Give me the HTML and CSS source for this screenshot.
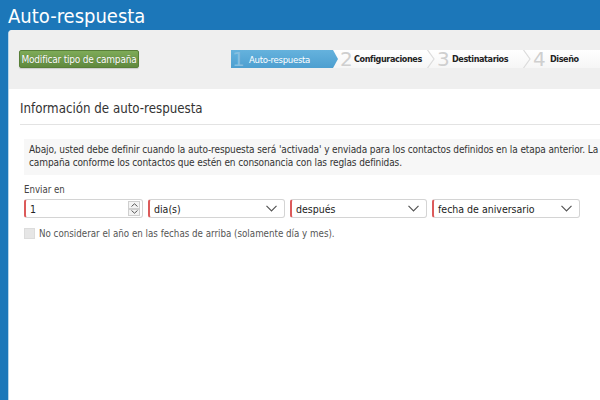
FILE: index.html
```html
<!DOCTYPE html>
<html lang="es">
<head>
<meta charset="utf-8">
<title>Auto-respuesta</title>
<link rel="stylesheet" href="styles.css">
</head>
<body>
<h1 class="page-title">Auto-respuesta</h1>
<div class="panel">
  <div class="toolbar">
    <button class="btn-green">Modificar tipo de campaña</button>
    <ol class="wizard">
      <li class="step active"><span class="num">1</span><span class="label">Auto-respuesta</span></li>
      <li class="step s2"><span class="num">2</span><span class="label">Configuraciones</span><svg class="sep" width="8" height="18" viewBox="0 0 8 18"><path d="M0.5 0 L7 9 L0.5 18" fill="none" stroke="#dcdcdc" stroke-width="1.2"/></svg></li>
      <li class="step s3"><span class="num">3</span><span class="label">Destinatarios</span><svg class="sep" width="8" height="18" viewBox="0 0 8 18"><path d="M0.5 0 L7 9 L0.5 18" fill="none" stroke="#dcdcdc" stroke-width="1.2"/></svg></li>
      <li class="step s4"><span class="num">4</span><span class="label">Diseño</span></li>
    </ol>
  </div>
  <div class="content">
    <h2 class="section-title">Información de auto-respuesta</h2>
    <div class="info">Abajo, usted debe definir cuando la auto-respuesta será 'activada' y enviada para los contactos definidos en la etapa anterior. La<br>campaña conforme los contactos que estén en consonancia con las reglas definidas.</div>
    <div class="field-label">Enviar en</div>
    <div class="fields">
      <div class="control num-input"><span class="val">1</span>
        <span class="spinner"><span class="sp">
          <svg width="7" height="4" viewBox="0 0 7 4"><path d="M0.5 3.5 L3.5 0.8 L6.5 3.5" fill="none" stroke="#555" stroke-width="1"/></svg></span><span class="sp">
          <svg width="7" height="4" viewBox="0 0 7 4"><path d="M0.5 0.5 L3.5 3.2 L6.5 0.5" fill="none" stroke="#555" stroke-width="1"/></svg></span></span>
      </div>
      <div class="control sel w2"><span class="val">dia(s)</span><svg class="chev" width="11" height="7" viewBox="0 0 11 7"><path d="M0.5 0.8 L5.5 5.8 L10.5 0.8" fill="none" stroke="#555" stroke-width="1.2"/></svg></div>
      <div class="control sel w2"><span class="val">después</span><svg class="chev" width="11" height="7" viewBox="0 0 11 7"><path d="M0.5 0.8 L5.5 5.8 L10.5 0.8" fill="none" stroke="#555" stroke-width="1.2"/></svg></div>
      <div class="control sel w3"><span class="val">fecha de aniversario</span><svg class="chev" width="11" height="7" viewBox="0 0 11 7"><path d="M0.5 0.8 L5.5 5.8 L10.5 0.8" fill="none" stroke="#555" stroke-width="1.2"/></svg></div>
    </div>
    <label class="check"><span class="box"></span>No considerar el año en las fechas de arriba (solamente día y mes).</label>
  </div>
</div>
</body>
</html>
```
FILE: styles.css
```css
html, body {
  margin: 0;
  padding: 0;
  height: 100%;
  overflow: hidden;
}
body {
  background: #1c77b9;
  font-family: "DejaVu Sans Condensed", "DejaVu Sans", sans-serif;
  color: #333;
}
.page-title {
  margin: 0;
  height: 30px;
  padding-left: 8px;
  font-size: 20px;
  font-weight: normal;
  line-height: 32px;
  color: #fff;
}
.panel {
  margin-left: 8px;
  border-left: 1px solid #b9d5ea;
  border-top-left-radius: 4px;
  background: #fff;
  height: 370px;
  overflow: hidden;
}
.toolbar {
  background: #efefef;
  height: 59px;
  display: flex;
  align-items: flex-start;
  padding: 20px 0 0 10px;
  box-sizing: border-box;
  border-top-left-radius: 3px;
}
.btn-green {
  flex: none;
  font-family: inherit;
  font-size: 10px;
  letter-spacing: -0.2px;
  white-space: nowrap;
  color: #fff;
  background: linear-gradient(#7eab58, #60893e);
  border: 1px solid #587f38;
  border-radius: 2px;
  height: 18px;
  width: 120px;
  padding: 0;
  text-shadow: 0 0 1px rgba(0,0,0,0.3);
  box-shadow: 0 1px 1px rgba(0,0,0,0.15);
}
.wizard {
  list-style: none;
  margin: 0 0 0 92px;
  padding: 0;
  display: flex;
  height: 18px;
  background: linear-gradient(#fff, #f6f6f6);
  flex: 1;
  min-width: 0;
}
.step {
  height: 18px;
  display: flex;
  align-items: center;
  font-size: 9px;
  letter-spacing: -0.4px;
  font-weight: bold;
  color: #222;
  flex: none;
  background: linear-gradient(#fff, #f6f6f6);
}
.step .num {
  font-family: "DejaVu Sans", sans-serif;
  font-size: 20px;
  font-weight: normal;
  color: #cfcfcf;
  line-height: 18px;
  height: 18px;
  letter-spacing: 0;
  width: 14px;
  margin-left: 2px;
}
.step .sep { margin-left: auto; flex: none; }
.step.active {
  width: 107px;
  background: linear-gradient(#65b2dd, #4d9fd0);
  clip-path: polygon(0 0, calc(100% - 5px) 0, 100% 50%, calc(100% - 5px) 100%, 0 100%);
  color: #fff;
  font-weight: normal;
  font-size: 9.5px;
  letter-spacing: -0.3px;
}
.step.active .num { color: #86bfe0; margin-left: 1px; }
.step.active .label { margin-left: 3px; }
.s2 { width: 97px; }
.s2 .label { margin-left: 0; }
.s3 { width: 96px; }
.s3 .label { margin-left: 1px; }
.s4 { width: 100px; }
.s4 .label { margin-left: 3px; }
.content {
  padding: 11px 0 0 11px;
}
.section-title {
  margin: 0;
  font-size: 13.2px;
  font-weight: normal;
  color: #333;
  padding-bottom: 6px;
  border-bottom: 1px solid #e3e3e3;
  line-height: 18px;
}
.info {
  margin: 14px 0 0 4px;
  background: #f7f7f7;
  padding: 4px 0 6px 5px;
  font-size: 10px;
  letter-spacing: -0.11px;
  line-height: 13px;
  color: #333;
  white-space: nowrap;
}
.field-label {
  margin: 9px 0 0 4px;
  font-size: 9.6px;
  color: #444;
  line-height: 12px;
}
.fields {
  display: flex;
  gap: 5px;
  margin: 3px 0 0 4px;
}
.control {
  box-sizing: border-box;
  height: 19px;
  border: 1px solid #d4d4d4;
  border-left: 2px solid #dc5a5a;
  border-radius: 3px;
  background: #fff;
  display: flex;
  align-items: center;
  font-size: 10.5px;
  color: #222;
  padding-left: 4px;
}
.control .val { flex: 1; }
.num-input { width: 119px; padding-right: 1px; }
.spinner {
  display: flex;
  flex-direction: column;
  height: 15px;
  width: 12px;
  margin-right: 1px;
}
.sp {
  flex: 1;
  border: 1px solid #cfcfcf;
  background: #f3f3f3;
  display: flex;
  align-items: center;
  justify-content: center;
}
.sel { padding-right: 7px; }
.w2 { width: 137px; }
.w3 { width: 148px; }
.check {
  display: flex;
  align-items: center;
  margin: 10px 0 0 4px;
  font-size: 9.7px;
  color: #555;
}
.check .box {
  width: 11px;
  height: 11px;
  background: #e6e6e6;
  border: 1px solid #dcdcdc;
  box-sizing: border-box;
  margin-right: 4px;
}
```
